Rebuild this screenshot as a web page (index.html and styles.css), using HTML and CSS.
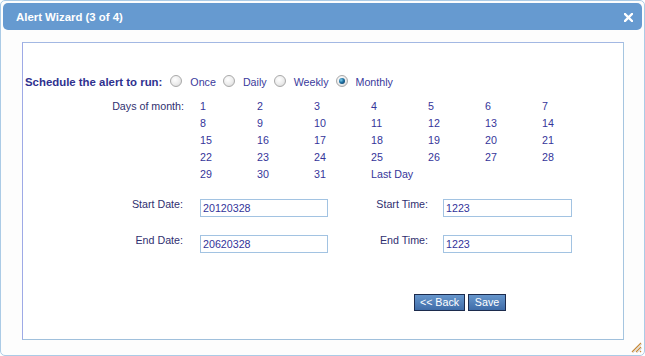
FILE: index.html
```html
<!DOCTYPE html>
<html>
<head>
<meta charset="utf-8">
<link rel="stylesheet" href="styles.css">
</head>
<body>
<div class="dialog">
  <div class="titlebar">
    <span class="title">Alert Wizard (3 of 4)</span>
    <svg class="close" width="9" height="9" viewBox="0 0 9 9"><path d="M1 1L8 8M8 1L1 8" stroke="#fff" stroke-width="2.4" stroke-linecap="square"/></svg>
  </div>
  <div class="body">
    <div class="panel">
      <div class="schedule">
        <span class="heading">Schedule the alert to run:</span>
        <span class="radio first"></span><span class="opt">Once</span>
        <span class="radio"></span><span class="opt">Daily</span>
        <span class="radio"></span><span class="opt">Weekly</span>
        <span class="radio checked"></span><span class="opt">Monthly</span>
      </div>
      <div class="days">
        <span class="days-label">Days of month:</span>
        <span>1</span><span>2</span><span>3</span><span>4</span><span>5</span><span>6</span><span>7</span>
        <span class="c2">8</span><span>9</span><span>10</span><span>11</span><span>12</span><span>13</span><span>14</span>
        <span class="c2">15</span><span>16</span><span>17</span><span>18</span><span>19</span><span>20</span><span>21</span>
        <span class="c2">22</span><span>23</span><span>24</span><span>25</span><span>26</span><span>27</span><span>28</span>
        <span class="c2">29</span><span>30</span><span>31</span><span>Last Day</span>
      </div>
      <div class="form">
        <span class="flabel">Start Date:</span>
        <span class="field">20120328</span>
        <span class="flabel right">Start Time:</span>
        <span class="field wide">1223</span>
        <span class="flabel">End Date:</span>
        <span class="field">20620328</span>
        <span class="flabel right">End Time:</span>
        <span class="field wide">1223</span>
      </div>
      <div class="buttons">
        <span class="btn back">&lt;&lt; Back</span>
        <span class="btn save">Save</span>
      </div>
    </div>
  </div>
  <svg class="grip" width="12" height="12" viewBox="0 0 12 12">
    <path d="M11 2L2 11M11 6L6 11M11 10L10 11" stroke="#c58a3a" stroke-width="1.2"/>
    <path d="M12 3L3 12M12 7L7 12" stroke="#ddd" stroke-width="1"/>
  </svg>
</div>
</body>
</html>
```
FILE: styles.css
```css
* { box-sizing: border-box; }
html, body { margin: 0; padding: 0; background: #fff; }
body { font-family: "Liberation Sans", Arial, sans-serif; }

.dialog {
  position: relative;
  width: 645px;
  height: 356px;
  border: 1px solid #abcbe6;
  border-radius: 5px;
  padding: 2px;
  background: #fdfdfd;
}

.titlebar {
  height: 27px;
  border-radius: 5px;
  background: #669ad0;
  display: flex;
  align-items: center;
  justify-content: space-between;
  padding: 0 9px 0 13px;
}
.title {
  color: #fff;
  font-weight: bold;
  font-size: 11.4px;
}
.close { display: block; margin-top: 1px; }

.body {
  padding: 12px 18px 0 19px;
}
.panel {
  width: 602px;
  height: 298px;
  background: #fff;
  border: 1px solid;
  border-color: #a3b8e3 #a5c5e0 #a0c0dc #9eaae6;
  padding-top: 31px;
}

.schedule {
  display: flex;
  align-items: center;
  padding-left: 2px;
  line-height: 16px;
  font-size: 10.7px;
  color: #3a3a9c;
}
.heading {
  font-weight: bold;
  font-size: 11.4px;
  color: #2f318f;
}
.radio {
  width: 12px;
  height: 12px;
  border-radius: 50%;
  border: 1px solid #a9a9a9;
  background: radial-gradient(circle at 40% 35%, #ffffff 0%, #ececec 55%, #cfcfcf 100%);
  margin-left: 7px;
  margin-bottom: 2px;
  position: relative;
}
.radio.first { margin-left: 8px; }
.radio.checked::after {
  content: "";
  position: absolute;
  left: 2px;
  top: 2px;
  width: 6px;
  height: 6px;
  border-radius: 50%;
  background: radial-gradient(circle at 35% 35%, #7fd0f0 0%, #1d6fa0 45%, #0b2f55 100%);
}
.opt { margin-left: 8px; }

.days {
  margin-top: 8px;
  display: grid;
  grid-template-columns: 177px repeat(7, 57px);
  font-size: 10.7px;
  line-height: 17px;
  color: #35359a;
}
.days-label {
  text-align: right;
  padding-right: 16px;
  color: #303070;
}
.days .c2 { grid-column: 2; }

.form {
  margin-top: 14px;
  display: grid;
  grid-template-columns: 177px 128px 115px 129px;
  row-gap: 16px;
  align-items: start;
  font-size: 10.7px;
}
.flabel {
  text-align: right;
  padding-right: 17px;
  line-height: 14px;
  color: #303070;
}
.flabel.right { padding-right: 15px; }
.field {
  display: block;
  margin-top: 2px;
  height: 18px;
  border: 1px solid #a2c3e2;
  background: #fff;
  padding-left: 2px;
  line-height: 17px;
  color: #33339a;
}

.buttons {
  margin-top: 41px;
  padding-left: 391px;
  display: flex;
  gap: 3px;
}
.btn {
  display: block;
  height: 17px;
  border: 1px solid #1c2b4d;
  background: linear-gradient(#6696cc, #3f6ca8);
  color: #fff;
  font-size: 10.7px;
  line-height: 15px;
  text-align: center;
}
.btn.back { width: 51px; }
.btn.save { width: 38px; }

.grip {
  position: absolute;
  right: 2px;
  bottom: 2px;
}
```
